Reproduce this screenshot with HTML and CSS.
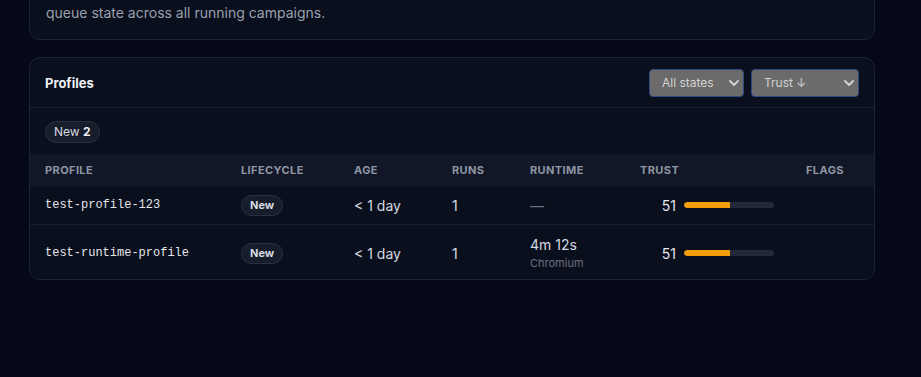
FILE: index.html
```html
<!DOCTYPE html>
<html lang="en">
<head>
    <meta charset="UTF-8">
    <meta name="viewport" content="width=device-width, initial-scale=1.0">
    <title>Profiles</title>
    <link rel="stylesheet" href="styles.css">
</head>
<body>
    <div class="page">
        <!-- summary card (scrolled past its top) -->
        <div class="card intro">
            <p class="lead">queue state across all running campaigns.</p>
        </div>

        <!-- profiles table -->
        <div class="card profiles">
            <div class="card-head">
                <h2>Profiles</h2>
                <div class="filters">
                    <div class="select-wrap state">
                        <select>
                            <option>All states</option>
                        </select>
                        <svg class="chev" width="10" height="6" viewBox="0 0 10 6"><path d="M1 1l4 4 4-4" fill="none" stroke="#d4d4d4" stroke-width="1.8" stroke-linecap="round" stroke-linejoin="round"/></svg>
                    </div>
                    <div class="select-wrap sort">
                        <select>
                            <option>Trust ↓</option>
                        </select>
                        <svg class="chev" width="10" height="6" viewBox="0 0 10 6"><path d="M1 1l4 4 4-4" fill="none" stroke="#d4d4d4" stroke-width="1.8" stroke-linecap="round" stroke-linejoin="round"/></svg>
                    </div>
                </div>
            </div>

            <div class="chips">
                <span class="chip">New <b>2</b></span>
            </div>

            <table>
                <colgroup>
                    <col style="width:196px">
                    <col style="width:113px">
                    <col style="width:98px">
                    <col style="width:78px">
                    <col style="width:110px">
                    <col style="width:166px">
                    <col style="width:83px">
                </colgroup>
                <thead>
                    <tr>
                        <th>Profile</th>
                        <th>Lifecycle</th>
                        <th>Age</th>
                        <th>Runs</th>
                        <th>Runtime</th>
                        <th>Trust</th>
                        <th>Flags</th>
                    </tr>
                </thead>
                <tbody>
                    <tr>
                        <td class="mono">test-profile-123</td>
                        <td><span class="pill">New</span></td>
                        <td>&lt; 1 day</td>
                        <td>1</td>
                        <td class="muted">—</td>
                        <td>
                            <div class="trust">
                                <span class="score">51</span>
                                <span class="bar"><span class="fill" style="width:51%"></span></span>
                            </div>
                        </td>
                        <td></td>
                    </tr>
                    <tr class="tall">
                        <td class="mono">test-runtime-profile</td>
                        <td><span class="pill">New</span></td>
                        <td>&lt; 1 day</td>
                        <td>1</td>
                        <td>
                            <div>4m 12s</div>
                            <div class="sub">Chromium</div>
                        </td>
                        <td>
                            <div class="trust">
                                <span class="score">51</span>
                                <span class="bar"><span class="fill" style="width:51%"></span></span>
                            </div>
                        </td>
                        <td></td>
                    </tr>
                </tbody>
            </table>
        </div>
    </div>
</body>
</html>
```

FILE: styles.css
```css
body {
    margin: 0;
    background-color: #050816;
    font-family: Inter, "Noto Sans", sans-serif;
    color: #d6d9e0;
}
.page {
    width: 846px;
    margin-left: 29px;
}
.card {
    background-color: #0a0f1d;
    border: 1px solid #1e2434;
    border-radius: 11px;
}
.intro {
    margin-top: -40px;
    padding: 42px 16px 16px;
}
.lead {
    margin: 0;
    font-size: 14px;
    line-height: 20px;
    color: #9aa0ad;
}
.profiles {
    margin-top: 17px;
    overflow: hidden;
}
.card-head {
    height: 49px;
    padding: 0 15px 0 15px;
    display: flex;
    align-items: center;
    justify-content: space-between;
    border-bottom: 1px solid #1a2030;
}
.card-head h2 {
    margin: 0;
    font-size: 13px;
    font-weight: 700;
    color: #eef0f4;
}
.filters {
    display: flex;
    gap: 7px;
}
.select-wrap {
    position: relative;
}
.select-wrap select {
    appearance: none;
    -webkit-appearance: none;
    height: 28px;
    padding: 0 0 0 12px;
    background-color: #6b6b6b;
    border: 1px solid #2c4a84;
    border-radius: 4px;
    color: #d2d2d2;
    font-family: Inter, "Noto Sans", sans-serif;
    font-size: 12px;
}
.select-wrap.state select {
    width: 95px;
}
.select-wrap.sort select {
    width: 108px;
}
.chev {
    position: absolute;
    right: 5px;
    top: 11px;
    pointer-events: none;
}
.chips {
    padding: 12px 15px 11px;
}
.chip {
    display: inline-block;
    height: 20px;
    line-height: 20px;
    padding: 0 8px;
    background-color: #171d2b;
    border: 1px solid #283043;
    border-radius: 11px;
    font-size: 12px;
    color: #d6d9e0;
}
.chip b {
    font-weight: 700;
    color: #eef0f4;
}
table {
    width: 844px;
    border-collapse: collapse;
    table-layout: fixed;
}
th {
    height: 32px;
    padding: 0 15px;
    background-color: #111726;
    text-align: left;
    font-size: 11px;
    font-weight: 700;
    letter-spacing: 0.4px;
    text-transform: uppercase;
    color: #8e95a4;
}
td {
    height: 38px;
    padding: 0 15px;
    font-size: 14px;
    color: #d6d9e0;
}
tbody tr + tr td {
    border-top: 1px solid #171d2b;
}
tr.tall td {
    height: 52px;
    padding-top: 2px;
}
.mono {
    font-family: "Liberation Mono", "DejaVu Sans Mono", monospace;
    font-size: 12px;
    color: #e4e6eb;
}
.pill {
    display: inline-block;
    height: 19px;
    line-height: 19px;
    padding: 0 8px;
    background-color: #171d2b;
    border: 1px solid #283043;
    border-radius: 11px;
    font-size: 11px;
    font-weight: 700;
    color: #d6d9e0;
}
.muted {
    color: #6b7080;
}
.sub {
    margin-top: 3px;
    font-size: 11px;
    color: #6b7080;
}
.trust {
    display: flex;
    align-items: center;
    gap: 8px;
}
.score {
    width: 36px;
    text-align: right;
    font-size: 14px;
    color: #e4e6eb;
}
.bar {
    width: 90px;
    height: 6px;
    border-radius: 3px;
    background-color: #232838;
    overflow: hidden;
}
.fill {
    display: block;
    height: 100%;
    background-color: #f59e0b;
    border-radius: 3px 0 0 3px;
}
```
